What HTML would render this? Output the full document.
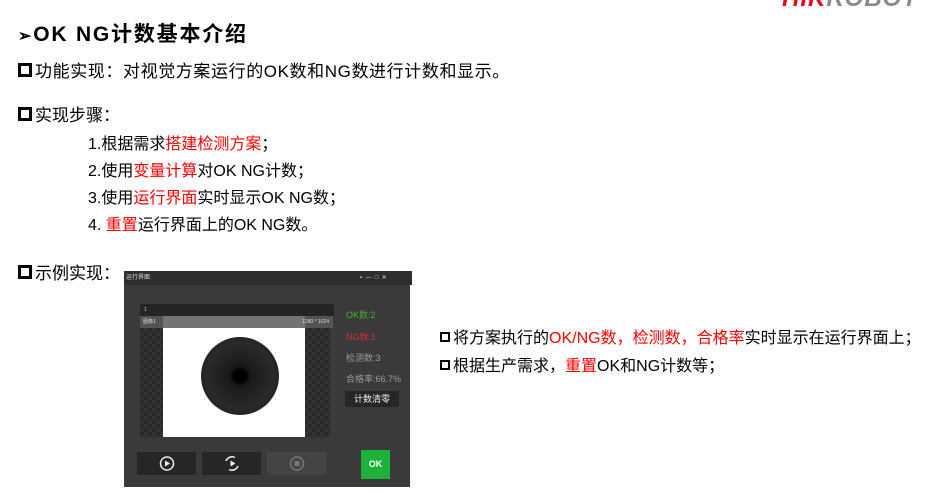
<!DOCTYPE html><html><head><meta charset="utf-8"><style>
body{margin:0;width:931px;height:493px;background:#fff;position:relative;overflow:hidden;font-family:"Liberation Sans","Noto Sans CJK SC",sans-serif;color:#000}
.a{position:absolute;white-space:nowrap}
.r{color:#f00}
.sq{display:inline-block;width:8px;height:8px;border:3px solid #000;margin-right:3px;vertical-align:0px}
.sm{display:inline-block;width:6px;height:6px;border:2px solid #000;margin-right:3px;vertical-align:1px}
.btn{position:absolute;top:452px;height:23px;background:#262626}
</style></head><body>
<div class="a" style="left:782px;top:-15px;font-size:24px;font-weight:bold;font-style:italic;letter-spacing:1px"><span style="color:#e60012">HIK</span><span style="color:#8a8a8a">ROBOT</span></div>
<div class="a" style="left:18px;top:18px;font-size:21px;font-weight:bold;letter-spacing:1.8px"><span style="font-size:16px">➢</span>OK NG计数基本介绍</div>
<div class="a" style="left:18px;top:57px;font-size:17px;letter-spacing:0.6px"><span class="sq"></span>功能实现：对视觉方案运行的OK数和NG数进行计数和显示。</div>
<div class="a" style="left:18px;top:101px;font-size:17px"><span class="sq"></span>实现步骤：</div>
<div class="a" style="left:88px;top:131px;font-size:16px;line-height:27px">1.根据需求<span class="r">搭建检测方案</span>；<br>2.使用<span class="r">变量计算</span>对OK NG计数；<br>3.使用<span class="r">运行界面</span>实时显示OK NG数；<br>4. <span class="r">重置</span>运行界面上的OK NG数。</div>
<div class="a" style="left:18px;top:259px;font-size:17px"><span class="sq"></span>示例实现：</div>
<div class="a" style="left:440px;top:325px;font-size:16px;line-height:28px"><span class="sm"></span>将方案执行的<span class="r">OK/NG数，检测数，合格率</span>实时显示在运行界面上；<br><span class="sm"></span>根据生产需求，<span class="r">重置</span>OK和NG计数等；</div>
<div class="a" style="left:124px;top:271px;width:286px;height:216px;background:#3a3a3a">
 <div class="a" style="left:0;top:0;width:286px;height:14px;background:#2e2e2e;color:#ddd;font-size:6px;line-height:14px;padding-left:2px">运行界面<span style="position:absolute;left:236px">▪ &nbsp;— &nbsp;□ &nbsp;✕</span></div>
 <div class="a" style="left:16px;top:33px;width:190px;height:133px;background:#2a2a2a;background-image:linear-gradient(45deg,#333 25%,transparent 25%,transparent 75%,#333 75%),linear-gradient(45deg,#333 25%,transparent 25%,transparent 75%,#333 75%);background-size:8px 8px;background-position:0 0,4px 4px"></div>
 <div class="a" style="left:16px;top:33px;width:190px;height:12px;background:#252525;color:#ccc;font-size:5px;line-height:12px;padding-left:4px">1</div>
 <div class="a" style="left:39px;top:45px;width:142px;height:121px;background:#fff"></div>
 <div class="a" style="left:16px;top:45px;width:190px;height:12px;background:rgba(90,90,90,.85);color:#ddd;font-size:5px;line-height:12px;padding-left:3px">图像1<span style="position:absolute;right:4px">1280 * 1024</span></div>
 <div class="a" style="left:77px;top:66px;width:78px;height:78px;border-radius:50%;background:radial-gradient(circle,#000 10%,#1a1a1a 20%,#2a2a2a 60%,#111 100%)"></div>
 <div class="a" style="left:222px;top:37px;font-size:9px;color:#4caf30">OK数:2</div>
 <div class="a" style="left:222px;top:59px;font-size:9px;color:#d03030">NG数:1</div>
 <div class="a" style="left:222px;top:80px;font-size:9px;color:#999">检测数:3</div>
 <div class="a" style="left:222px;top:101px;font-size:9px;color:#999">合格率:66.7%</div>
 <div class="a" style="left:221px;top:120px;width:54px;height:16px;background:#262626;color:#eee;font-size:9px;line-height:16px;text-align:center">计数清零</div>
 <div class="btn" style="left:13px;top:181px;width:59px"><svg width="59" height="23"><circle cx="30" cy="11.5" r="6.5" fill="none" stroke="#eee" stroke-width="1.5"/><path d="M28 8.5v6l5-3z" fill="#eee"/></svg></div>
 <div class="btn" style="left:78px;top:181px;width:59px"><svg width="59" height="23"><path d="M24 9a6.5 6.5 0 0 1 9-3.5M36 14a6.5 6.5 0 0 1-9 3.5" fill="none" stroke="#eee" stroke-width="1.5"/><path d="M28.5 8.5v6l5-3z" fill="#eee"/></svg></div>
 <div class="btn" style="left:143px;top:181px;width:59px;background:#444"><svg width="59" height="23"><circle cx="30" cy="11.5" r="6.5" fill="none" stroke="#777" stroke-width="1.5"/><rect x="27.5" y="9" width="5" height="5" fill="#777"/></svg></div>
 <div class="a" style="left:237px;top:179px;width:29px;height:29px;background:#1db03a;color:#fff;font-weight:bold;font-size:9px;line-height:29px;text-align:center">OK</div>
</div>
</body></html>
